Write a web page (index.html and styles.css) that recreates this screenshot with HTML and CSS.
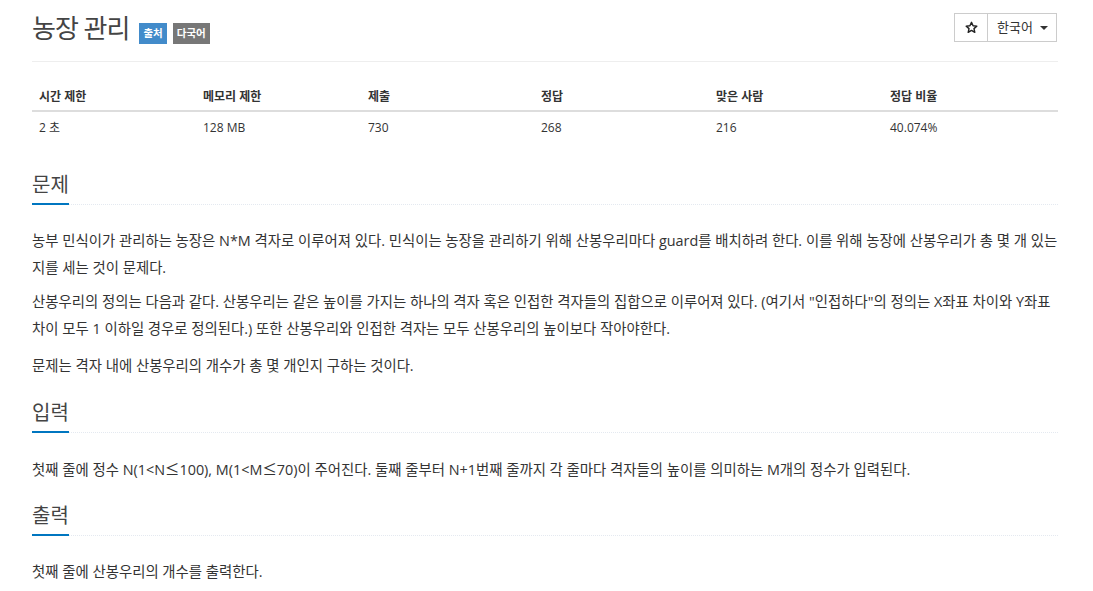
FILE: index.html
```html
<!DOCTYPE html>
<html lang="ko">
<head>
<meta charset="utf-8">
<title>농장 관리</title>
<link rel="stylesheet" href="styles.css">
</head>
<body>
<div class="container">
  <div class="page-header">
    <div class="title-wrap">
      <h1 class="title">농장 관리</h1>
      <span class="badge badge-blue">출처</span>
      <span class="badge badge-gray">다국어</span>
    </div>
    <div class="btn-group">
      <span class="btn btn-star"><svg width="13" height="13" viewBox="0 0 24 24"><path d="M12 2.5l2.9 6.3 6.9.7-5.2 4.6 1.5 6.8L12 17.4l-6.1 3.5 1.5-6.8-5.2-4.6 6.9-.7z" fill="none" stroke="#222" stroke-width="2.6" stroke-linejoin="round"/></svg></span>
      <span class="btn btn-lang">한국어<span class="caret"></span></span>
    </div>
  </div>

  <table class="info">
    <thead>
      <tr>
        <th class="c1">시간 제한</th>
        <th class="c2">메모리 제한</th>
        <th class="c3">제출</th>
        <th class="c4">정답</th>
        <th class="c5">맞은 사람</th>
        <th class="c6">정답 비율</th>
      </tr>
    </thead>
    <tbody>
      <tr>
        <td>2 초</td>
        <td>128 MB</td>
        <td>730</td>
        <td>268</td>
        <td>216</td>
        <td>40.074%</td>
      </tr>
    </tbody>
  </table>

  <section class="section">
    <div class="headline"><h2>문제</h2></div>
    <div class="text">
      <p>농부 민식이가 관리하는 농장은 N*M 격자로 이루어져 있다. 민식이는 농장을 관리하기 위해 산봉우리마다 guard를 배치하려 한다. 이를 위해 농장에 산봉우리가 총 몇 개 있는지를 세는 것이 문제다.</p>
      <p class="p-wide">산봉우리의 정의는 다음과 같다. 산봉우리는 같은 높이를 가지는 하나의 격자 혹은 인접한 격자들의 집합으로 이루어져 있다. (여기서 "인접하다"의 정의는 X좌표 차이와 Y좌표 차이 모두 1 이하일 경우로 정의된다.) 또한 산봉우리와 인접한 격자는 모두 산봉우리의 높이보다 작아야한다.</p>
      <p>문제는 격자 내에 산봉우리의 개수가 총 몇 개인지 구하는 것이다.</p>
    </div>
  </section>

  <section class="section">
    <div class="headline"><h2>입력</h2></div>
    <div class="text">
      <p>첫째 줄에 정수 N(1&lt;N<span class="cjk">≤</span>100), M(1&lt;M<span class="cjk">≤</span>70)이 주어진다. 둘째 줄부터 N+1번째 줄까지 각 줄마다 격자들의 높이를 의미하는 M개의 정수가 입력된다.</p>
    </div>
  </section>

  <section class="section">
    <div class="headline"><h2>출력</h2></div>
    <div class="text">
      <p>첫째 줄에 산봉우리의 개수를 출력한다.</p>
    </div>
  </section>
</div>
</body>
</html>
```

FILE: styles.css
```css
* { box-sizing: border-box; }
html, body { margin: 0; padding: 0; background: #fff; }
body {
  font-family: "Open Sans", "Noto Sans CJK KR", sans-serif;
  font-size: 14px;
  color: #333;
  line-height: 1.42857;
}
.container {
  width: 1026px;
  margin-left: 32px;
}
.page-header {
  display: flex;
  justify-content: space-between;
  align-items: flex-start;
  padding-top: 13px;
  padding-bottom: 17px;
  border-bottom: 1px solid #eee;
}
.title-wrap {
  display: flex;
  align-items: flex-end;
  gap: 6px;
  height: 31px;
}
.title {
  margin: 0 4px 0 0;
  font-size: 26px;
  font-weight: 400;
  line-height: 31px;
  letter-spacing: -1px;
  color: #444;
}
.badge {
  display: inline-block;
  font-size: 10.5px;
  font-weight: 700;
  color: #fff;
  line-height: 15px;
  padding: 3px 4px;
}
.badge-blue { background: #428bca; }
.badge-gray { background: #777; }
.btn-group {
  display: flex;
  border: 1px solid #ccc;
  height: 29px;
  margin-right: 1px;
}
.btn {
  display: flex;
  align-items: center;
  color: #333;
}
.btn-star {
  width: 33px;
  justify-content: center;
  border-right: 1px solid #ccc;
}
.btn-lang {
  font-size: 13px;
  padding: 0 8px 0 9px;
}
.caret {
  display: inline-block;
  width: 0; height: 0;
  border-left: 4px solid transparent;
  border-right: 4px solid transparent;
  border-top: 4px solid #333;
  margin-left: 7px;
}
.info {
  width: 100%;
  border-collapse: collapse;
  margin-top: 18px;
  margin-bottom: 27px;
  font-size: 12px;
}
.info th {
  text-align: left;
  font-weight: 700;
  padding: 8px 7px 5px;
  border-bottom: 2px solid #ddd;
  line-height: 17px;
}
.info td {
  padding: 7px 7px 8px;
  line-height: 17px;
}
.c1 { width: 164px; }
.c2 { width: 165px; }
.c3 { width: 173px; }
.c4 { width: 175px; }
.c5 { width: 174px; }
.c6 { width: 175px; }
.headline {
  border-bottom: 1px dotted #e4e9f0;
  margin: 19.5px 0 22px 0;
}
.headline h2 {
  display: inline-block;
  margin: 0 0 -1px 0;
  font-size: 20px;
  font-weight: 400;
  line-height: 28px;
  padding-bottom: 4px;
  border-bottom: 2px solid #0076c0;
  color: #444;
}
.text p {
  margin: 0 0 7px 0;
  font-size: 14.4px;
  line-height: 27px;
}
.text .p-wide { margin-bottom: 10px; }
.cjk { font-family: "Noto Sans CJK KR", sans-serif; }
```
